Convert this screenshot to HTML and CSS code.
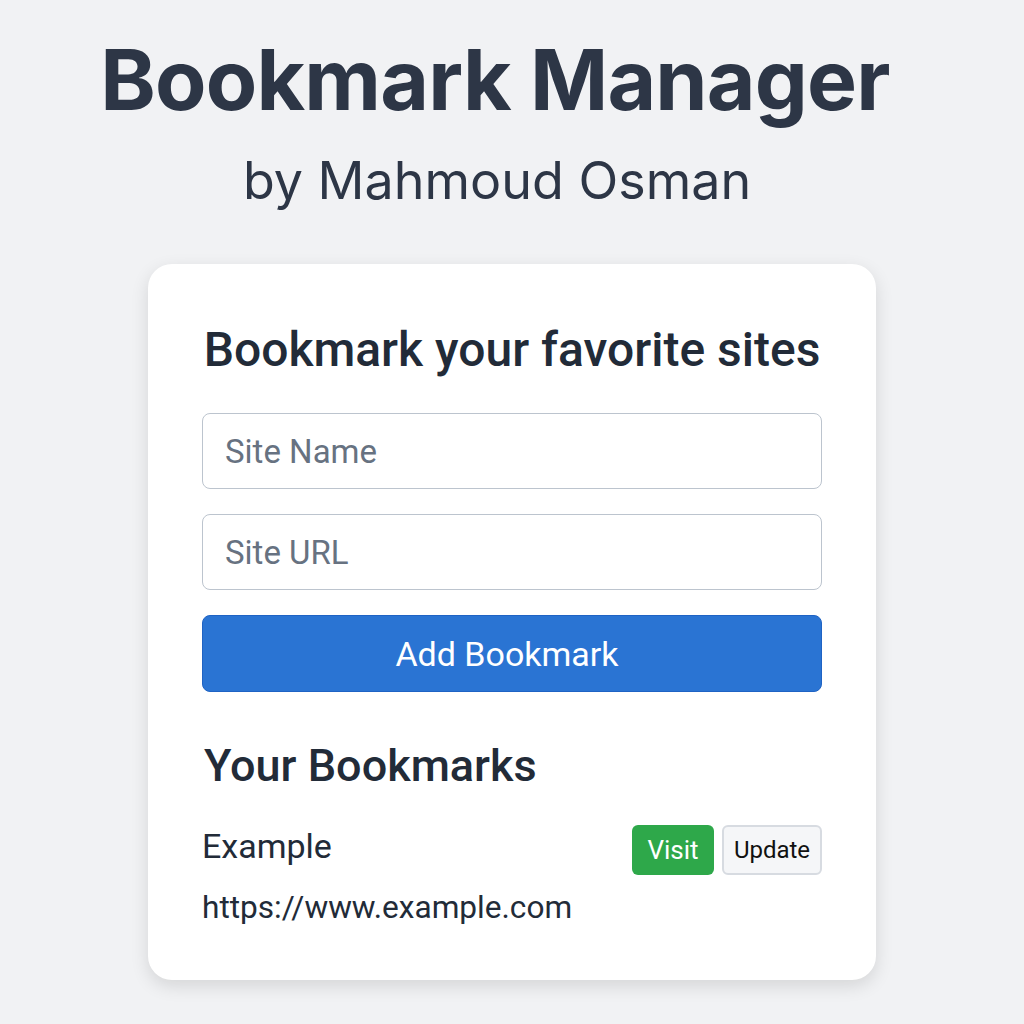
FILE: index.html
```html
<!DOCTYPE html>
<html>
<head>
<meta charset="utf-8">
<link rel="stylesheet" href="styles.css">
</head>
<body>
<header class="hero">
  <h1 class="title">Bookmark Manager</h1>
  <p class="subtitle">by Mahmoud Osman</p>
</header>
<main class="card">
  <h2 class="card-title">Bookmark your favorite sites</h2>
  <form class="form">
    <input class="field" type="text" placeholder="Site Name">
    <input class="field" type="text" placeholder="Site URL">
    <button class="btn-add" type="button">Add Bookmark</button>
  </form>
  <h3 class="list-title">Your Bookmarks</h3>
  <div class="item">
    <div class="item-row">
      <span class="item-name">Example</span>
      <div class="item-actions">
        <button class="btn-visit" type="button">Visit</button>
        <button class="btn-update" type="button">Update</button>
      </div>
    </div>
    <div class="item-url">https://www.example.com</div>
  </div>
</main>
</body>
</html>
```
FILE: styles.css
```css
* { box-sizing: border-box; }
html, body { margin: 0; padding: 0; }
body {
  background: #f1f2f4;
  font-family: Roboto, "Noto Sans", sans-serif;
  color: #222b38;
  width: 1024px;
  height: 1024px;
  overflow: hidden;
}
.hero {
  display: flex;
  flex-direction: column;
  align-items: center;
  padding-top: 30px;
}
.title {
  margin: 0 0 0 -34px;
  font-family: Inter, "Noto Sans", sans-serif;
  font-weight: 700;
  font-size: 84px;
  line-height: 100px;
  letter-spacing: -0.8px;
  color: #2d3646;
}
.subtitle {
  margin: 20px 0 0 -30px;
  font-family: Inter, "Noto Sans", sans-serif;
  font-weight: 400;
  font-size: 52px;
  line-height: 62px;
  color: #2d3646;
}
.card {
  width: 728px;
  margin: 52px auto 0;
  background: #fff;
  border-radius: 24px;
  box-shadow: 0 6px 18px rgba(0,0,0,0.12);
  padding: 56px 54px 52px;
}
.card-title {
  margin: 0;
  text-align: center;
  font-weight: 500;
  font-size: 48px;
  line-height: 60px;
  color: #222b38;
}
.form {
  display: flex;
  flex-direction: column;
  gap: 25px;
  margin-top: 33px;
}
.field {
  height: 76px;
  border: 1.5px solid #bcc4ce;
  border-radius: 8px;
  padding: 0 22px;
  font-family: Roboto, sans-serif;
  font-size: 33px;
  color: #222b38;
  outline: none;
}
.field::placeholder { color: #677281; }
.btn-add {
  height: 77px;
  border: 1px solid #1f63c4;
  border-radius: 8px;
  background: #2a74d3;
  color: #fff;
  font-family: Roboto, sans-serif;
  font-size: 34px;
  font-weight: 400;
  padding: 0 10px 0 0;
}
.list-title {
  margin: 46px 0 0 2px;
  font-weight: 500;
  font-size: 45px;
  line-height: 56px;
  color: #222b38;
}
.item { margin-top: 30px; }
.item-row {
  display: flex;
  justify-content: space-between;
  align-items: flex-start;
}
.item-name {
  font-size: 34px;
  line-height: 44px;
  color: #222b38;
}
.item-actions {
  display: flex;
  gap: 8px;
  margin-top: 1px;
}
.btn-visit {
  height: 50px;
  width: 82px;
  border: none;
  border-radius: 6px;
  background: #2ea84a;
  color: #fff;
  font-family: Roboto, sans-serif;
  font-size: 26px;
}
.btn-update {
  height: 50px;
  width: 100px;
  border: 2px solid #d7dbe1;
  border-radius: 6px;
  background: #f5f6f8;
  color: #111;
  font-family: Roboto, sans-serif;
  font-size: 24px;
  padding: 0;
}
.item-url {
  margin-top: 13px;
  font-size: 31.6px;
  line-height: 40px;
  color: #222b38;
}
```
